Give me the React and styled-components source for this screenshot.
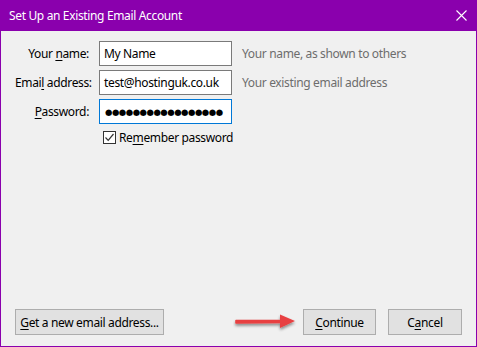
import React from "react";
import styled, { createGlobalStyle } from "styled-components";

const purple = "#8A00AD";
const font = `"Noto Sans", "Open Sans", Arial, sans-serif`;

const Global = createGlobalStyle`
  html, body { margin: 0; padding: 0; background: #f0f0f0; }
  * { box-sizing: border-box; }
`;

const Window = styled.div`
  width: 477px;
  height: 347px;
  display: flex;
  flex-direction: column;
  border: 1px solid ${purple};
  border-top: none;
  font-family: ${font};
  font-size: 12px;
  letter-spacing: -0.35px;
  color: #000;
  background: #f0f0f0;
`;

const TitleBar = styled.div`
  height: 31px;
  flex: none;
  margin: 0 -1px;
  background: ${purple};
  color: #fff;
  display: flex;
  align-items: center;
  justify-content: space-between;
  padding: 0 10px 0 9px;
`;

const Title = styled.span`
  font-size: 12px;
  line-height: 16px;
`;

const CloseIcon = styled.svg`
  width: 11px;
  height: 11px;
  display: block;
`;

const Body = styled.div`
  flex: 1;
  display: flex;
  flex-direction: column;
  justify-content: space-between;
  padding: 10px 14px 11px 14px;
`;

const Form = styled.div`
  display: grid;
  grid-template-columns: 74px 133px auto;
  column-gap: 10px;
  row-gap: 4px;
  align-items: center;
`;

const Label = styled.label`
  text-align: right;
  white-space: nowrap;
`;

const Key = styled.span`
  text-decoration: underline;
  text-underline-offset: 2px;
`;

const Input = styled.div`
  height: 25px;
  border: 1px solid ${(p) => (p.$focused ? "#0078D7" : "#7A7A7A")};
  background: #fff;
  display: flex;
  align-items: center;
  padding: 0 4px;
  white-space: nowrap;
  overflow: hidden;
`;

const Dots = styled.span`
  font-family: "DejaVu Sans", sans-serif;
  font-size: 8.5px;
  letter-spacing: ${(p) => p.$ls}px;
  padding-left: 1px;
`;

const Hint = styled.span`
  color: #6d6d6d;
  white-space: nowrap;
`;

const CheckRow = styled.div`
  grid-column: 2 / 4;
  display: flex;
  align-items: center;
  gap: 3px;
  padding-left: 4px;
  margin-top: 1px;
`;

const Box = styled.span`
  width: 13px;
  height: 13px;
  border: 1px solid #333;
  background: #fff;
  display: flex;
  align-items: center;
  justify-content: center;
`;

const Buttons = styled.div`
  display: flex;
  align-items: center;
`;

const Button = styled.div`
  height: 26px;
  width: ${(p) => p.$w}px;
  border: 1px solid #adadad;
  background: #e1e1e1;
  display: flex;
  align-items: center;
  justify-content: center;
  margin-left: ${(p) => p.$ml || 0}px;
  white-space: nowrap;
`;

const Spacer = styled.div`
  flex: 1;
`;

const Arrow = styled.svg`
  width: 66px;
  height: 22px;
  margin-right: 4px;
  display: block;
`;

export default function App() {
  return (
    <>
      <Global />
      <Window>
        <TitleBar>
          <Title>Set Up an Existing Email Account</Title>
          <CloseIcon viewBox="0 0 11 11">
            <path d="M0.5 0.5 L10.5 10.5 M10.5 0.5 L0.5 10.5" stroke="#fff" strokeWidth="1.1" fill="none" />
          </CloseIcon>
        </TitleBar>
        <Body>
          <Form>
            <Label>Your <Key>n</Key>ame:</Label>
            <Input>My Name</Input>
            <Hint>Your name, as shown to others</Hint>
            <Label>Emai<Key>l</Key> address:</Label>
            <Input>test@hostinguk.co.uk</Input>
            <Hint>Your existing email address</Hint>
            <Label><Key>P</Key>assword:</Label>
            <Input $focused>
              <Dots $ls={-0.5}>●●●●●●●●●●●●●●●●●</Dots>
            </Input>
            <span />
            <CheckRow>
              <Box>
                <svg width="11" height="11" viewBox="0 0 11 11">
                  <path d="M1.5 5.5 L4.2 8.3 L9.5 2" stroke="#333" strokeWidth="1.2" fill="none" />
                </svg>
              </Box>
              <span>Re<Key>m</Key>ember password</span>
            </CheckRow>
          </Form>
          <Buttons>
            <Button $w={149}><span><Key>G</Key>et a new email address...</span></Button>
            <Spacer />
            <Arrow viewBox="0 0 66 22">
              <defs>
                <filter id="sh" x="-20%" y="-50%" width="140%" height="200%">
                  <feGaussianBlur in="SourceAlpha" stdDeviation="1.5" />
                  <feOffset dx="0" dy="2" result="b" />
                  <feComponentTransfer><feFuncA type="linear" slope="0.45" /></feComponentTransfer>
                  <feMerge><feMergeNode /><feMergeNode in="SourceGraphic" /></feMerge>
                </filter>
              </defs>
              <g filter="url(#sh)">
                <path d="M3 9.5 L49 9.5 L49 11.5 L3 12 Z" fill="#E84142" stroke="#E84142" strokeWidth="1.6" strokeLinejoin="round" />
                <path d="M47 3.5 L62 10 L47 17 Z" fill="#E84142" />
              </g>
            </Arrow>
            <Button $w={73}><span><Key>C</Key>ontinue</span></Button>
            <Button $w={74} $ml={12}><span>C<Key>a</Key>ncel</span></Button>
          </Buttons>
        </Body>
      </Window>
    </>
  );
}
